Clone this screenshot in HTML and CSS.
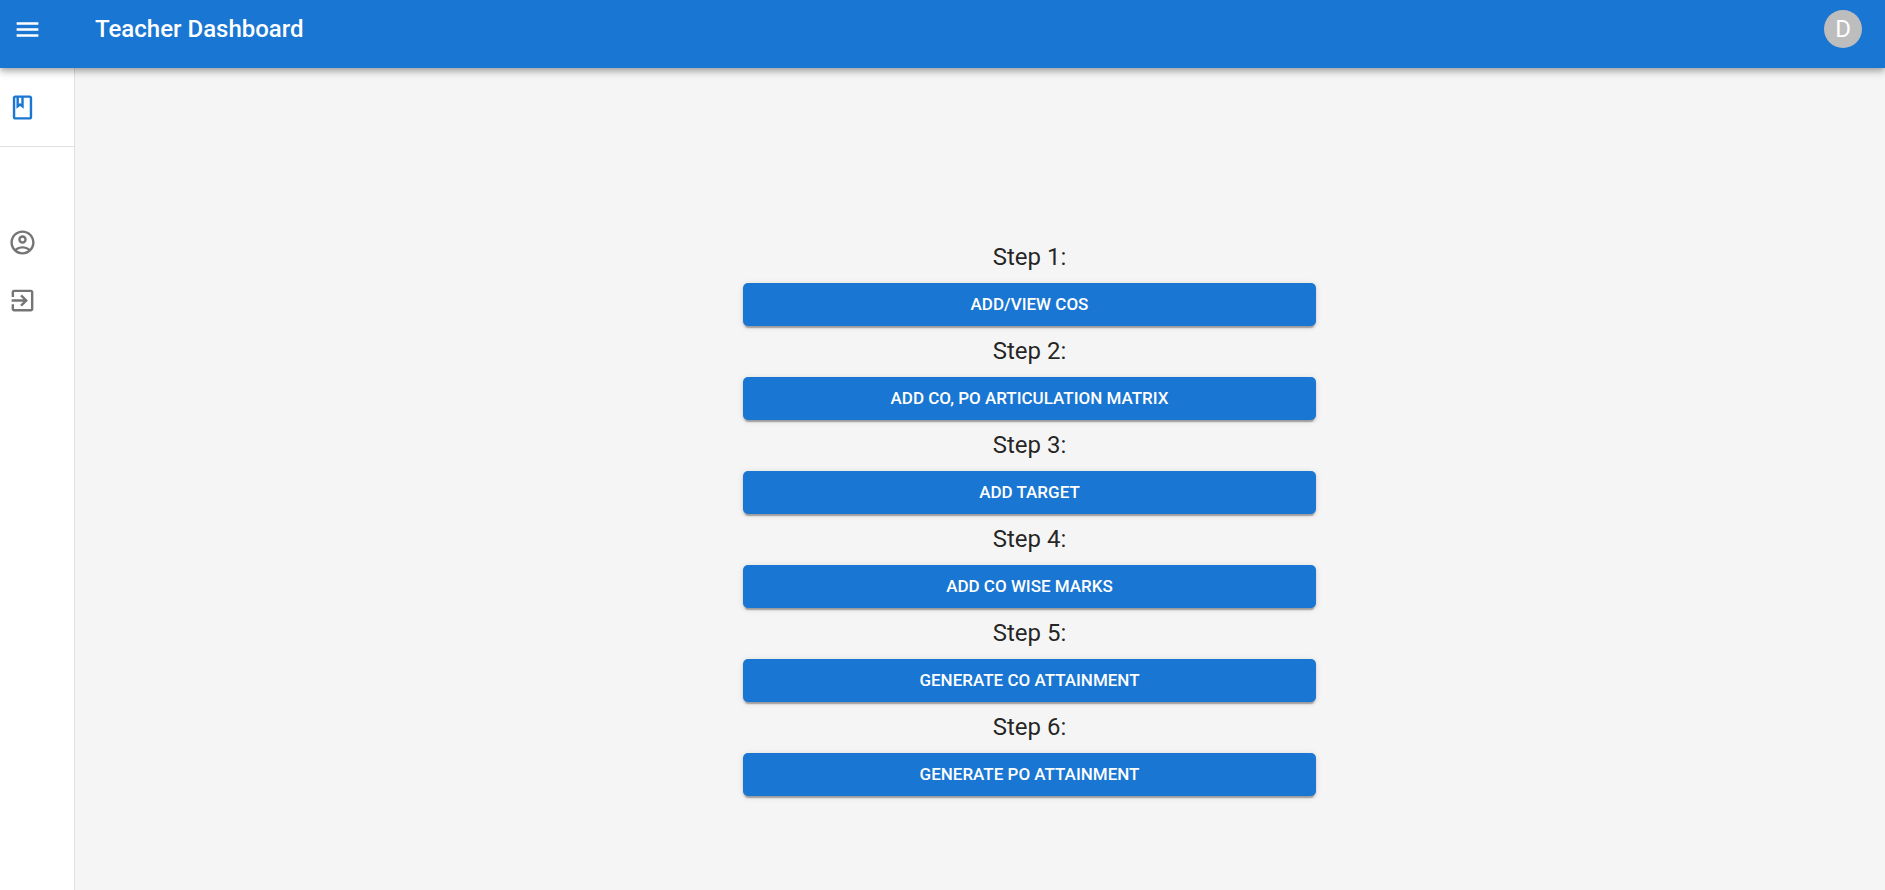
FILE: index.html
```html
<!DOCTYPE html>
<html lang="en">
<head>
<meta charset="utf-8">
<meta name="viewport" content="width=device-width, initial-scale=1">
<title>Teacher Dashboard</title>
<link rel="stylesheet" href="styles.css">
</head>
<body>
<header class="app-bar">
  <button class="icon-button" type="button" aria-label="Open menu">
    <svg class="icon" viewBox="0 0 24 24" aria-hidden="true"><path d="M3 18h18v-2H3v2zm0-5h18v-2H3v2zm0-7v2h18V6H3z"/></svg>
  </button>
  <h1 class="title">Teacher Dashboard</h1>
  <button class="avatar" type="button" aria-label="Account D">D</button>
</header>
<div class="layout">
  <nav class="sidebar" aria-label="Main">
    <div class="nav-main">
      <a class="nav-item active" href="#courses" aria-label="Courses">
        <svg class="icon" viewBox="0 0 24 24" aria-hidden="true"><path d="M18 2H6c-1.100 0-2 .9-2 2v16c0 1.100.9 2 2 2h12c1.100 0 2-.9 2-2V4c0-1.100-.9-2-2-2zM9 4h2v5l-1-.75L9 9V4zm9 16H6V4h1v9l3-2.250L13 13V4h5v16z"/></svg>
      </a>
    </div>
    <div class="nav-account">
      <a class="nav-item" href="#profile" aria-label="Profile">
        <svg class="icon" viewBox="0 0 24 24" aria-hidden="true"><path d="M12 2C6.480 2 2 6.480 2 12s4.480 10 10 10 10-4.480 10-10S17.520 2 12 2zM7.350 18.500C8.660 17.560 10.260 17 12 17s3.340.56 4.650 1.500C15.340 19.440 13.740 20 12 20s-3.340-.56-4.650-1.500zm10.790-1.380C16.450 15.800 14.320 15 12 15s-4.450.8-6.140 2.120C4.700 15.730 4 13.950 4 12c0-4.420 3.580-8 8-8s8 3.580 8 8c0 1.950-.7 3.730-1.860 5.120zM12 6c-1.930 0-3.500 1.570-3.500 3.500S10.070 13 12 13s3.500-1.570 3.500-3.500S13.930 6 12 6zm0 5c-.83 0-1.500-.67-1.500-1.500S11.170 8 12 8s1.500.67 1.500 1.500S12.830 11 12 11z"/></svg>
      </a>
      <a class="nav-item" href="#logout" aria-label="Log out">
        <svg class="icon" viewBox="0 0 24 24" aria-hidden="true"><path d="M10.090 15.590L11.500 17l5-5-5-5-1.410 1.410L12.670 11H3v2h9.670l-2.580 2.590zM19 3H5c-1.110 0-2 .9-2 2v4h2V5h14v14H5v-4H3v4c0 1.100.89 2 2 2h14c1.100 0 2-.9 2-2V5c0-1.100-.9-2-2-2z"/></svg>
      </a>
    </div>
  </nav>
  <main class="content">
    <div class="steps">
      <h2 class="step">Step 1:</h2>
      <button class="action" type="button">Add/View COs</button>
      <h2 class="step">Step 2:</h2>
      <button class="action" type="button">Add CO, PO Articulation Matrix</button>
      <h2 class="step">Step 3:</h2>
      <button class="action" type="button">Add Target</button>
      <h2 class="step">Step 4:</h2>
      <button class="action" type="button">Add CO Wise Marks</button>
      <h2 class="step">Step 5:</h2>
      <button class="action" type="button">Generate CO Attainment</button>
      <h2 class="step">Step 6:</h2>
      <button class="action" type="button">Generate PO Attainment</button>
    </div>
  </main>
</div>
</body>
</html>
```

FILE: styles.css
```css
* {
  box-sizing: border-box;
}

body {
  display: flex;
  flex-direction: column;
  min-height: 100vh;
  margin: 0;
  background: #f5f5f5;
  color: rgba(0, 0, 0, 0.87);
  font-family: Roboto, "Liberation Sans", sans-serif;
}

button {
  border: 0;
  font-family: inherit;
  cursor: pointer;
}

.app-bar {
  position: relative;
  z-index: 1;
  display: flex;
  align-items: center;
  padding: 10px 23px 20px 13px;
  background: #1976d2;
  color: #fff;
  box-shadow: 0 2px 5px -1px rgba(0, 0, 0, 0.2), 0 5px 6px rgba(0, 0, 0, 0.14), 0 1px 12px rgba(0, 0, 0, 0.12);
}

.icon {
  display: block;
  width: 29px;
  height: 29px;
  fill: currentColor;
}

.icon-button {
  padding: 0;
  background: none;
  color: inherit;
}

.title {
  flex: 1;
  margin: 0 0 0 53px;
  font-size: 24px;
  font-weight: 500;
  line-height: 38px;
}

.avatar {
  width: 38px;
  height: 38px;
  padding: 0;
  border-radius: 50%;
  background: #bdbdbd;
  color: #fff;
  font-size: 24px;
  line-height: 38px;
}

.layout {
  display: flex;
  flex: 1;
}

.sidebar {
  width: 75px;
  border-right: 1px solid #e0e0e0;
  background: #fff;
}

.nav-main {
  padding: 10px 0;
  border-bottom: 1px solid #e0e0e0;
}

.nav-account {
  padding-top: 66px;
}

.nav-item {
  display: flex;
  align-items: center;
  height: 58px;
  padding-left: 8px;
  color: #757575;
}

.nav-item.active {
  color: #1976d2;
}

.content {
  display: flex;
  flex: 1;
  align-items: center;
  justify-content: center;
  padding: 75px 0 0 99px;
}

.steps {
  display: flex;
  flex-direction: column;
  gap: 6px;
  width: 573px;
}

.step {
  margin: 0;
  font-size: 24px;
  font-weight: 400;
  line-height: 39px;
  text-align: center;
}

.action {
  padding: 7px 19px;
  border-radius: 5px;
  background: #1976d2;
  color: #fff;
  box-shadow: 0 4px 1px -2px rgba(0, 0, 0, 0.2), 0 2px 2px rgba(0, 0, 0, 0.14), 0 1px 6px rgba(0, 0, 0, 0.12);
  font-size: 17px;
  font-weight: 500;
  line-height: 29px;
  text-transform: uppercase;
}
```
